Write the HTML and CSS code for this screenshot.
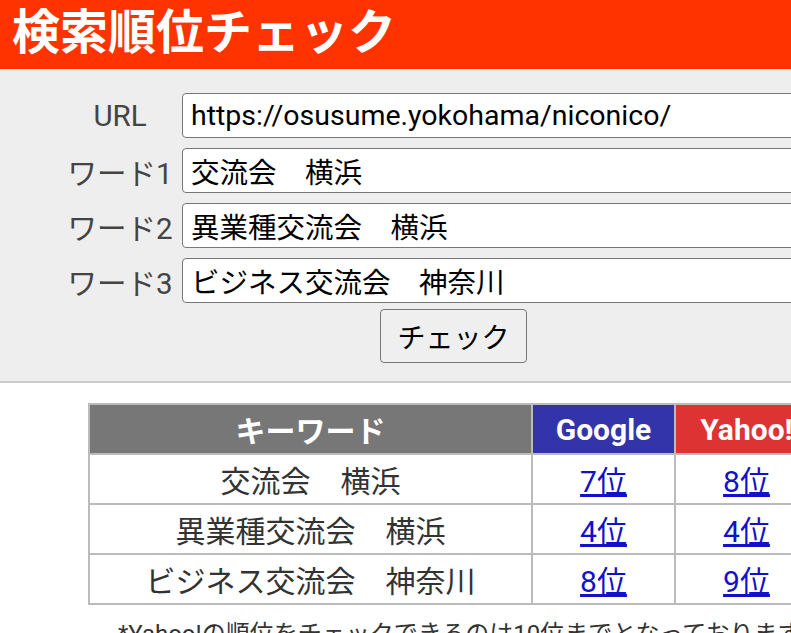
FILE: index.html
```html
<!DOCTYPE html>
<html>
	<head>
		<meta charset="UTF-8" />
		<title>検索順位チェック</title>
		<link rel="stylesheet" href="styles.css">
	</head>

	<body>
		<div class="page">
			<h1 class="title">検索順位チェック</h1>

			<form class="check-form">
				<div class="form-rows">
					<label class="form-label" for="url">URL</label>
					<input id="url" class="form-input" type="text" value="https://osusume.yokohama/niconico/" />

					<label class="form-label" for="word1">ワード1</label>
					<input id="word1" class="form-input" type="text" value="交流会　横浜" />

					<label class="form-label" for="word2">ワード2</label>
					<input id="word2" class="form-input" type="text" value="異業種交流会　横浜" />

					<label class="form-label" for="word3">ワード3</label>
					<input id="word3" class="form-input" type="text" value="ビジネス交流会　神奈川" />
				</div>
				<div class="form-submit">
					<button type="button" class="check-button">チェック</button>
				</div>
			</form>

			<table class="result">
				<thead>
					<tr>
						<th class="col-keyword">キーワード</th>
						<th class="col-google">Google</th>
						<th class="col-yahoo">Yahoo!</th>
					</tr>
				</thead>
				<tbody>
					<tr>
						<td>交流会　横浜</td>
						<td><a href="#">7位</a></td>
						<td><a href="#">8位</a></td>
					</tr>
					<tr>
						<td>異業種交流会　横浜</td>
						<td><a href="#">4位</a></td>
						<td><a href="#">4位</a></td>
					</tr>
					<tr>
						<td>ビジネス交流会　神奈川</td>
						<td><a href="#">8位</a></td>
						<td><a href="#">9位</a></td>
					</tr>
				</tbody>
			</table>

			<p class="note">*Yahoo!の順位をチェックできるのは10位までとなっております</p>
		</div>
	</body>
</html>
```

FILE: styles.css
```css
* {
	box-sizing: border-box;
	font-family: Roboto, "Noto Sans CJK JP", sans-serif;
}

html,
body {
	margin: 0;
	background-color: #fff;
}

.page {
	width: 907px;
}

.title {
	margin: 0;
	height: 69px;
	padding-left: 12px;
	background-color: #ff3300;
	color: #fff;
	font-size: 48px;
	font-weight: bold;
	line-height: 66px;
}

.check-form {
	margin: 0;
	padding: 24px 0 18px;
	background-color: #eee;
	border-bottom: 2px solid #ccc;
}

.form-rows {
	display: grid;
	grid-template-columns: 118px 662px;
	row-gap: 10px;
	column-gap: 3px;
	margin-left: 61px;
	align-items: center;
}

.form-label {
	text-align: center;
	color: #444;
	font-size: 29.5px;
}

.form-input {
	height: 45px;
	padding: 0 8px;
	border: 1.5px solid #777;
	border-radius: 4px;
	background-color: #fff;
	color: #000;
	font-size: 28.5px;
}

.form-submit {
	display: flex;
	justify-content: center;
	margin-top: 6px;
}

.check-button {
	width: 147px;
	height: 54px;
	padding: 0;
	border: 1.5px solid #777;
	border-radius: 4px;
	background-color: #efefef;
	color: #000;
	font-size: 28px;
}

.result {
	margin: 20px auto 0;
	border-collapse: collapse;
	border: 2px solid #bbb;
}

.result th,
.result td {
	border: 2px solid #bbb;
	padding: 0;
	text-align: center;
	font-size: 30px;
}

.result th {
	height: 50px;
	color: #fff;
	font-weight: bold;
}

.result td {
	height: 50px;
	color: #333;
}

.result a {
	color: #1111cc;
}

.col-keyword {
	width: 443px;
	background-color: #777;
}

.col-google {
	width: 143px;
	background-color: #3333aa;
}

.col-yahoo {
	width: 143px;
	background-color: #dd3333;
}

.note {
	margin: 9px 0 0 118px;
	white-space: nowrap;
	color: #333;
	font-size: 24px;
}
```
